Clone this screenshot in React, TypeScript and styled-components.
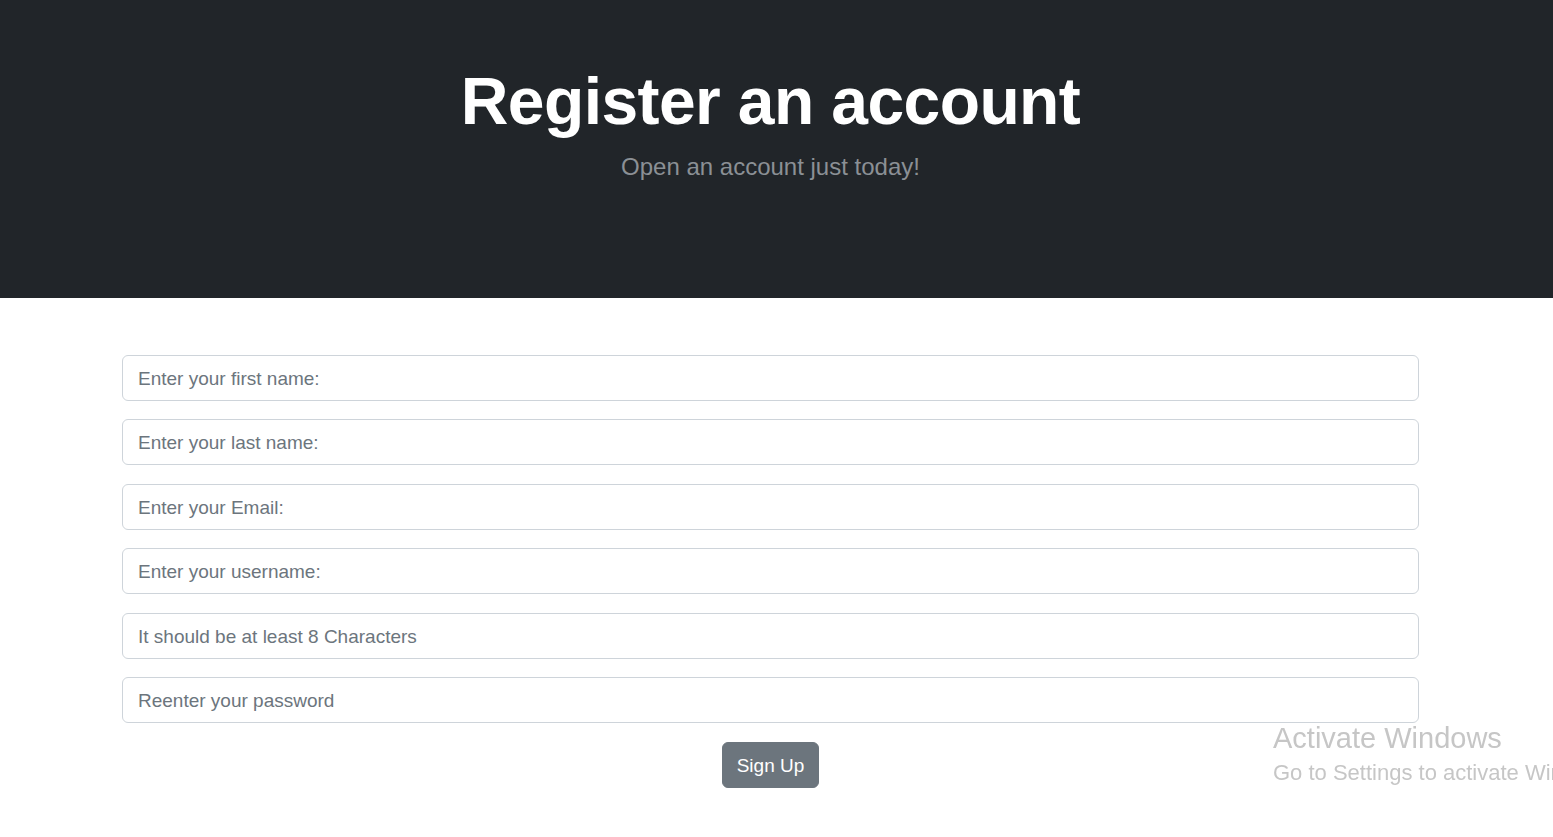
import React from "react";
import styled, { createGlobalStyle } from "styled-components";

const GlobalStyle = createGlobalStyle`
  html, body {
    margin: 0;
    padding: 0;
    background: #ffffff;
    overflow-x: hidden;
  }
  body {
    font-family: "Liberation Sans", Arial, sans-serif;
    color: #212529;
  }
  * {
    box-sizing: border-box;
  }
`;

const fields = [
  { name: "firstName", type: "text", placeholder: "Enter your first name:" },
  { name: "lastName", type: "text", placeholder: "Enter your last name:" },
  { name: "email", type: "email", placeholder: "Enter your Email:" },
  { name: "username", type: "text", placeholder: "Enter your username:" },
  {
    name: "password",
    type: "password",
    placeholder: "It should be at least 8 Characters",
  },
  { name: "password2", type: "password", placeholder: "Reenter your password" },
];

const App = () => {
  return (
    <>
      <GlobalStyle />
      <Hero>
        <HeroInner>
          <Title>Register an account</Title>
          <Lead>Open an account just today!</Lead>
        </HeroInner>
      </Hero>
      <Main>
        <Form onSubmit={(e) => e.preventDefault()}>
          {fields.map((f) => (
            <Input
              key={f.name}
              name={f.name}
              type={f.type}
              placeholder={f.placeholder}
            />
          ))}
          <SubmitButton type="submit">Sign Up</SubmitButton>
        </Form>
      </Main>
      <Watermark>
        <WatermarkTitle>Activate Windows</WatermarkTitle>
        <WatermarkText>Go to Settings to activate Windows.</WatermarkText>
      </Watermark>
    </>
  );
};

export default App;

const Hero = styled.header`
  background-color: #212529;
  height: 298px;
  padding-right: 12px;
`;

const HeroInner = styled.div`
  padding-top: 62px;
  text-align: center;
`;

const Title = styled.h1`
  margin: 0;
  color: #ffffff;
  font-size: 66px;
  font-weight: 700;
  line-height: 1.2;
  letter-spacing: -0.6px;
`;

const Lead = styled.p`
  margin: 8px 0 0;
  color: #8b9095;
  font-size: 24px;
  line-height: 1.5;
`;

const Main = styled.main`
  padding: 57px 12px 0 0;
`;

const Form = styled.form`
  width: 1297px;
  margin: 0 auto;
  display: flex;
  flex-direction: column;
  align-items: center;
  gap: 18.4px;
`;

const Input = styled.input`
  width: 100%;
  height: 46px;
  padding: 2px 15px 0;
  border: 1px solid #ced4da;
  border-radius: 6px;
  background: #ffffff;
  font-family: inherit;
  font-size: 19px;
  color: #212529;
  outline: none;

  &::placeholder {
    color: #6c757d;
  }
`;

const SubmitButton = styled.button`
  margin-top: 0.6px;
  height: 46px;
  padding: 2px 14px 0;
  border: 1px solid #6c757d;
  border-radius: 6px;
  background-color: #6c757d;
  color: #ffffff;
  font-family: inherit;
  font-size: 19px;
  cursor: pointer;
`;

const Watermark = styled.div`
  position: fixed;
  left: 1273px;
  top: 722px;
  white-space: nowrap;
  pointer-events: none;
  color: #c6c6c6;
`;

const WatermarkTitle = styled.div`
  font-size: 29px;
  line-height: 33px;
`;

const WatermarkText = styled.div`
  font-size: 22px;
  line-height: 26px;
  margin-top: 5px;
`;
